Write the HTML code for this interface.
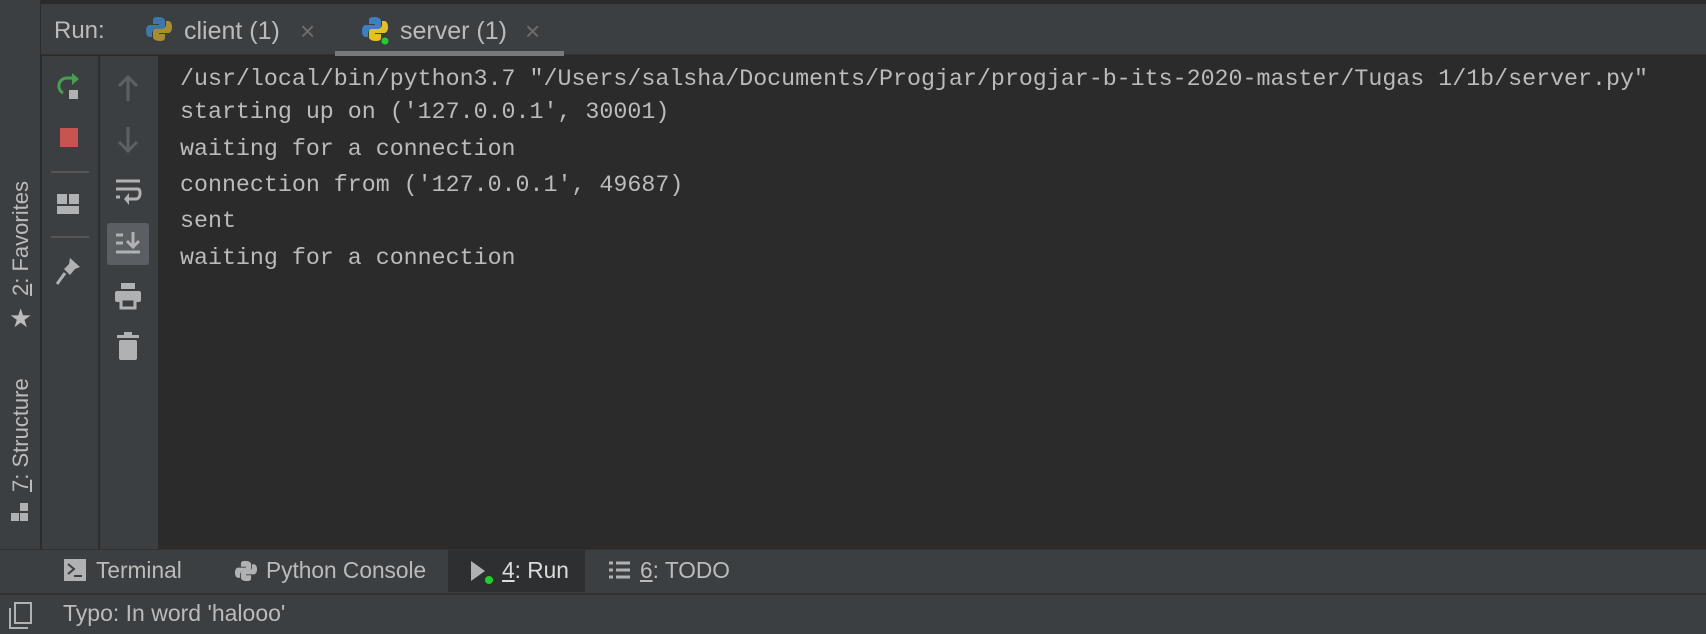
<!DOCTYPE html>
<html><head><meta charset="utf-8"><style>
*{margin:0;padding:0;box-sizing:border-box}
body{width:1706px;height:634px;background:#2b2b2b;position:relative;overflow:hidden;font-family:"Liberation Sans",sans-serif;color:#bbbbbb}
.abs{position:absolute}
.ui{font-size:22.7px;color:#bbbbbb;white-space:nowrap}
.tab{font-size:25px}
.mono{font-family:"Liberation Mono",monospace;font-size:23.3px;color:#bbbbbb;white-space:pre;left:180px}
</style></head><body>
<div class="abs" style="left:0;top:0;width:1706px;height:4px;background:#2b2b2b"></div>
<div class="abs" style="left:0;top:0;width:41px;height:593px;background:#3c3f41;border-right:1px solid #2b2b2b"></div>
<div class="abs" style="left:41px;top:4px;width:1665px;height:51px;background:#3c3f41;border-bottom:1px solid #323232"></div>
<div class="abs ui tab" style="left:54px;top:17px;font-size:24px">Run:</div>
<svg class="abs" style="left:146px;top:16px" width="26" height="26" viewBox="0 0 26 26"><path d="M12 1c-5 0-5 2-5 4v3h6v1H4c-3 0-4 3-4 6s1 6 4 6h2v-4c0-2 2-4 4-4h6c2 0 3-1 3-3V5c0-2-2-4-7-4z" fill="#3d77b0"/><path d="M14 25c5 0 5-2 5-4v-3h-6v-1h9c3 0 4-3 4-6s-1-6-4-6h-2v4c0 2-2 4-4 4h-6c-2 0-3 1-3 3v5c0 2 2 4 7 4z" fill="#a88e2a"/></svg>
<div class="abs ui tab" style="left:184px;top:17px">client (1)</div>
<div class="abs ui" style="left:300px;top:16px;color:#6e6e6e;font-size:26px">×</div>
<svg class="abs" style="left:362px;top:16px" width="30" height="30" viewBox="0 0 30 30"><path d="M12 1c-5 0-5 2-5 4v3h6v1H4c-3 0-4 3-4 6s1 6 4 6h2v-4c0-2 2-4 4-4h6c2 0 3-1 3-3V5c0-2-2-4-7-4z" fill="#3d7fc4"/><path d="M14 25c5 0 5-2 5-4v-3h-6v-1h9c3 0 4-3 4-6s-1-6-4-6h-2v4c0 2-2 4-4 4h-6c-2 0-3 1-3 3v5c0 2 2 4 7 4z" fill="#e6c020"/><circle cx="23" cy="25" r="4" fill="#1fd02a" stroke="#3c3f41" stroke-width="1"/></svg>
<div class="abs ui tab" style="left:400px;top:17px">server (1)</div>
<div class="abs ui" style="left:525px;top:16px;color:#6e6e6e;font-size:26px">×</div>
<div class="abs" style="left:335px;top:51px;width:229px;height:5px;background:#777b80"></div>
<div class="abs" style="left:42px;top:56px;width:57px;height:494px;background:#3c3f41;border-right:1px solid #2f3133"></div>
<div class="abs" style="left:100px;top:56px;width:58px;height:494px;background:#3c3f41"></div>
<svg class="abs" style="left:55px;top:72px" width="30" height="30" viewBox="0 0 30 30"><path d="M18 6H12a8 8 0 0 0-4 15" fill="none" stroke="#499c54" stroke-width="3"/><path d="M17 1l7 6-7 6z" fill="#499c54"/><rect x="14" y="18" width="9" height="9" fill="#afb1b3"/></svg>
<div class="abs" style="left:60px;top:128px;width:18px;height:19px;background:#c75450"></div>
<div class="abs" style="left:51px;top:171px;width:38px;height:2px;background:#555"></div>
<svg class="abs" style="left:57px;top:194px" width="24" height="22"><rect x="0" y="0" width="10" height="10" fill="#afb1b3"/><rect x="12" y="0" width="10" height="10" fill="#afb1b3"/><rect x="0" y="12" width="22" height="8" fill="#afb1b3"/></svg>
<div class="abs" style="left:51px;top:236px;width:38px;height:2px;background:#555"></div>
<svg class="abs" style="left:56px;top:256px" width="26" height="30" viewBox="0 0 26 30"><path d="M14 2l10 9-5 2-5 6-6-6 5-5z" fill="#afb1b3"/><path d="M9 17L1 28" stroke="#afb1b3" stroke-width="3"/></svg>
<svg class="abs" style="left:116px;top:74px" width="24" height="28"><path d="M12 27V4M3 12l9-9 9 9" fill="none" stroke="#5e6163" stroke-width="3"/></svg>
<svg class="abs" style="left:116px;top:126px" width="24" height="28"><path d="M12 1v23M3 16l9 9 9-9" fill="none" stroke="#5e6163" stroke-width="3"/></svg>
<svg class="abs" style="left:114px;top:178px" width="28" height="32"><path d="M2 3h24M2 11h22M2 19h4" stroke="#afb1b3" stroke-width="3" fill="none"/><path d="M24 11c3 0 3 10-2 10h-9" stroke="#afb1b3" stroke-width="3" fill="none"/><path d="M15 15l-5 6 5 6z" fill="#afb1b3"/></svg>
<div class="abs" style="left:107px;top:223px;width:42px;height:42px;background:#5b5f63;border-radius:3px"></div>
<svg class="abs" style="left:114px;top:230px" width="28" height="28"><path d="M2 5h7M2 13h7M2 22h24" stroke="#afb1b3" stroke-width="3" fill="none"/><path d="M19 2v14M13 11l6 6 6-6" stroke="#afb1b3" stroke-width="3" fill="none"/></svg>
<svg class="abs" style="left:114px;top:282px" width="28" height="28"><rect x="7" y="1" width="14" height="6" fill="#afb1b3"/><rect x="1" y="9" width="26" height="11" rx="2" fill="#afb1b3"/><rect x="7" y="17" width="14" height="9" fill="#3c3f41" stroke="#afb1b3" stroke-width="3"/></svg>
<svg class="abs" style="left:117px;top:332px" width="24" height="30"><rect x="0" y="3" width="22" height="3" fill="#afb1b3"/><rect x="7" y="0" width="8" height="4" fill="#afb1b3"/><rect x="2" y="8" width="18" height="20" rx="2" fill="#afb1b3"/></svg>
<div class="abs ui" style="left:8px;top:296px;transform:rotate(-90deg);transform-origin:0 0;width:130px;font-size:22px"><span style="text-decoration:underline">2</span>: Favorites</div>
<div class="abs" style="left:9px;top:303px;font-size:26px;color:#bbb">★</div>
<div class="abs ui" style="left:8px;top:492px;transform:rotate(-90deg);transform-origin:0 0;width:130px;font-size:22px"><span style="text-decoration:underline">7</span>: Structure</div>
<svg class="abs" style="left:11px;top:503px" width="20" height="20"><rect x="9" y="0" width="8" height="8" fill="#afb1b3"/><rect x="0" y="10" width="8" height="8" fill="#afb1b3"/><rect x="9" y="10" width="8" height="8" fill="#afb1b3"/></svg>
<div class="abs mono" style="top:66px">/usr/local/bin/python3.7 "/Users/salsha/Documents/Progjar/progjar-b-its-2020-master/Tugas 1/1b/server.py"</div>
<div class="abs mono" style="top:99px">starting up on ('127.0.0.1', 30001)</div>
<div class="abs mono" style="top:136px">waiting for a connection</div>
<div class="abs mono" style="top:172px">connection from ('127.0.0.1', 49687)</div>
<div class="abs mono" style="top:208px">sent</div>
<div class="abs mono" style="top:245px">waiting for a connection</div>
<div class="abs" style="left:0;top:549px;width:1706px;height:44px;background:#3c3f41;border-top:1px solid #323232"></div>
<div class="abs" style="left:448px;top:550px;width:137px;height:42px;background:#2d2f30"></div>
<svg class="abs" style="left:64px;top:559px" width="22" height="22"><rect width="22" height="22" fill="#afb1b3"/><path d="M4 5l6 5-6 5" stroke="#3c3f41" stroke-width="2" fill="none"/><path d="M10 17h8" stroke="#3c3f41" stroke-width="2"/></svg>
<div class="abs ui" style="left:96px;top:557px">Terminal</div>
<svg class="abs" style="left:235px;top:559px" width="22" height="24" viewBox="0 0 26 26"><path d="M12 1c-5 0-5 2-5 4v3h6v1H4c-3 0-4 3-4 6s1 6 4 6h2v-4c0-2 2-4 4-4h6c2 0 3-1 3-3V5c0-2-2-4-7-4z" fill="#afb1b3"/><path d="M14 25c5 0 5-2 5-4v-3h-6v-1h9c3 0 4-3 4-6s-1-6-4-6h-2v4c0 2-2 4-4 4h-6c-2 0-3 1-3 3v5c0 2 2 4 7 4z" fill="#afb1b3"/></svg>
<div class="abs ui" style="left:266px;top:557px">Python Console</div>
<svg class="abs" style="left:470px;top:560px" width="24" height="26"><path d="M1 1l14 10-14 10z" fill="#afb1b3"/><circle cx="19" cy="20" r="4" fill="#1fd02a"/></svg>
<div class="abs ui" style="left:502px;top:557px;color:#dcdcdc"><span style="text-decoration:underline">4</span>: Run</div>
<svg class="abs" style="left:609px;top:561px" width="22" height="20"><path d="M0 2h4M0 9h4M0 16h4M7 2h14M7 9h14M7 16h14" stroke="#afb1b3" stroke-width="3"/></svg>
<div class="abs ui" style="left:640px;top:557px"><span style="text-decoration:underline">6</span>: TODO</div>
<div class="abs" style="left:0;top:593px;width:1706px;height:41px;background:#3c3f41;border-top:2px solid #323232"></div>
<svg class="abs" style="left:8px;top:601px" width="26" height="28"><path d="M7 2h16v20H7z" fill="none" stroke="#afb1b3" stroke-width="2"/><path d="M2 7v20h18" fill="none" stroke="#afb1b3" stroke-width="2"/></svg>
<div class="abs ui" style="left:63px;top:600px;font-size:23px">Typo: In word 'halooo'</div>
</body></html>
